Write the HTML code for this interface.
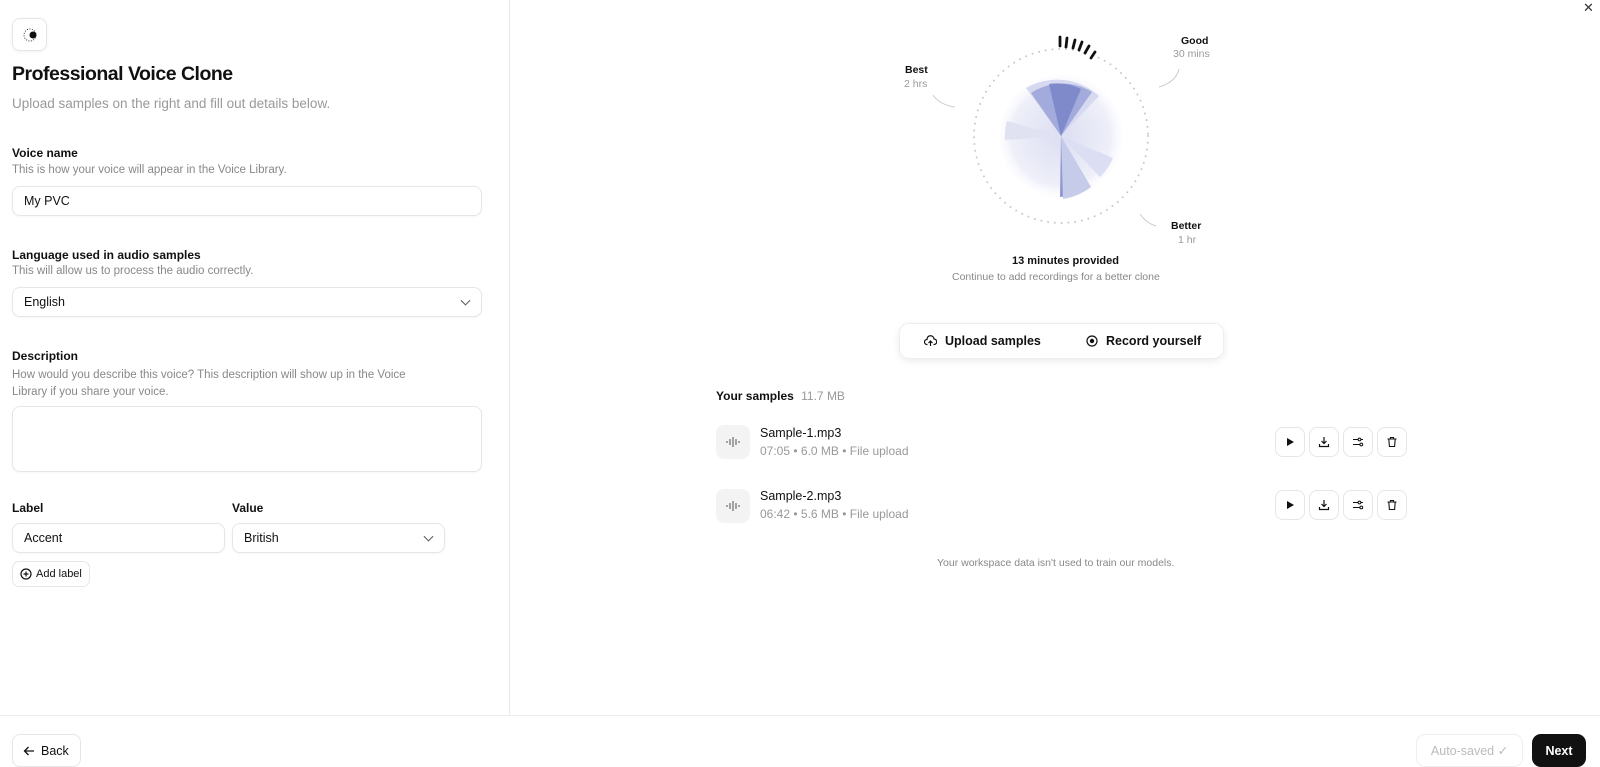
<!DOCTYPE html>
<html><head><meta charset="utf-8"><style>
*{box-sizing:border-box;margin:0;padding:0}
body{width:1600px;height:767px;background:#fff;font-family:"Liberation Sans",sans-serif;color:#111;position:relative;overflow:hidden}
.a{position:absolute}
.lbl{font-size:12px;font-weight:bold;color:#111}
.hint{font-size:11.5px;color:#888}
.inp{position:absolute;border:1px solid #e6e6e6;border-radius:8px;background:#fff;font-size:12.5px;padding-left:11px;display:flex;align-items:center;color:#111;box-shadow:0 1px 2px rgba(0,0,0,.04)}
.chev{position:absolute;right:12px;top:50%;width:7px;height:7px;border-right:1.3px solid #555;border-bottom:1.3px solid #555;transform:translateY(-70%) rotate(45deg)}
.ib{position:absolute;width:30px;height:30px;border:1px solid #e6e6e6;border-radius:8px;display:flex;align-items:center;justify-content:center;background:#fff}
.wav{position:absolute;width:34px;height:34px;border-radius:8px;background:#f3f3f3;display:flex;align-items:center;justify-content:center}
</style></head><body>
<div class="a" style="left:509px;top:0;width:1px;height:715px;background:#e8e8e8"></div>
<div class="a" style="left:0;top:715px;width:1600px;height:1px;background:#ececec"></div>

<div class="a" style="left:12px;top:18px;width:35px;height:33px;border:1px solid #e6e6e6;border-radius:8px;box-shadow:0 1px 3px rgba(0,0,0,.06)">
<svg width="35" height="33" viewBox="0 0 35 33"><circle cx="17" cy="16" r="6" fill="none" stroke="#333" stroke-width="1" stroke-dasharray="1 1.5"/><circle cx="20" cy="16" r="3.5" fill="#111"/></svg></div>
<div class="a" style="left:12px;top:63px;font-size:19.5px;font-weight:bold;letter-spacing:-.5px">Professional Voice Clone</div>
<div class="a" style="left:12px;top:96px;font-size:13.5px;color:#999">Upload samples on the right and fill out details below.</div>

<div class="a lbl" style="left:12px;top:146px">Voice name</div>
<div class="a hint" style="left:12px;top:164px">This is how your voice will appear in the Voice Library.</div>
<div class="inp" style="left:12px;top:186px;width:470px;height:30px">My PVC</div>

<div class="a lbl" style="left:12px;top:248px">Language used in audio samples</div>
<div class="a hint" style="left:12px;top:265px">This will allow us to process the audio correctly.</div>
<div class="inp" style="left:12px;top:287px;width:470px;height:30px">English<span class="chev"></span></div>

<div class="a lbl" style="left:12px;top:349px">Description</div>
<div class="a hint" style="left:12px;top:367px;width:428px;line-height:17px">How would you describe this voice? This description will show up in the Voice Library if you share your voice.</div>
<div class="inp" style="left:12px;top:406px;width:470px;height:66px"></div>

<div class="a lbl" style="left:12px;top:501px">Label</div>
<div class="a lbl" style="left:232px;top:501px">Value</div>
<div class="inp" style="left:12px;top:523px;width:213px;height:30px">Accent</div>
<div class="inp" style="left:232px;top:523px;width:213px;height:30px">British<span class="chev"></span></div>
<div class="a" style="left:12px;top:561px;width:78px;height:26px;border:1px solid #e6e6e6;border-radius:7px;font-size:11px;display:flex;align-items:center;padding-left:7px;gap:4px"><svg width="12" height="12" viewBox="0 0 12 12"><circle cx="6" cy="6" r="5" fill="none" stroke="#111" stroke-width="1.2"/><path d="M6 3.5v5M3.5 6h5" stroke="#111" stroke-width="1.2"/></svg>Add label</div>

<div class="a" style="left:12px;top:734px;width:69px;height:33px;border:1px solid #e6e6e6;border-radius:8px;font-size:12.5px;display:flex;align-items:center;padding-left:10px;gap:6px"><svg width="12" height="12" viewBox="0 0 12 12"><path d="M11 6H1.5M5.5 2L1.5 6l4 4" fill="none" stroke="#111" stroke-width="1.3"/></svg>Back</div>
<div class="a" style="left:1416px;top:734px;width:107px;height:33px;border:1px solid #eee;border-radius:9px;font-size:12.5px;color:#bbb;display:flex;align-items:center;justify-content:center">Auto-saved ✓</div>
<div class="a" style="left:1532px;top:734px;width:54px;height:33px;background:#111;border-radius:9px;font-size:12.5px;font-weight:bold;color:#fff;display:flex;align-items:center;justify-content:center">Next</div>
<div class="a" style="left:1583px;top:0;font-size:13px;color:#333">✕</div>

<svg class="a" style="left:880px;top:20px" width="340" height="230" viewBox="880 20 340 230">
<defs><radialGradient id="g" cx="50%" cy="50%" r="50%"><stop offset="0" stop-color="#dcdef2"/><stop offset=".8" stop-color="#eeeff9"/><stop offset="1" stop-color="#fafaff" stop-opacity=".2"/></radialGradient></defs>
<circle cx="1061" cy="136" r="62" fill="url(#g)"/>
<circle cx="1061" cy="136" r="87" fill="none" stroke="#c8c8c8" stroke-width="2" stroke-linecap="round" stroke-dasharray="0 6.8"/>
<path d="M1061 136L1026 88A62 62 0 0 1 1099 96Z" fill="#d6d9f0"/>
<path d="M1061 136L1031 93A57 57 0 0 1 1092 92Z" fill="#a2abdb"/>
<path d="M1061 136L1049 84A53 53 0 0 1 1081 89Z" fill="#7f8aca"/>
<path d="M1061 136L1075 194A60 60 0 0 1 1060 197Z" fill="#8e98d0"/>
<path d="M1061 136L1091 187A62 62 0 0 1 1063 199Z" fill="#c6cbea"/>
<path d="M1061 136L1113 158A57 57 0 0 1 1100 177Z" fill="#dcdff3"/>
<path d="M1061 136L1005 140A56 56 0 0 1 1007 121Z" fill="#e0e2f2"/>
<g stroke="#111" stroke-width="2.8" stroke-linecap="round">
<path d="M1060 37v9M1067 38l-1 9M1075 40l-2 8M1082 42l-3 8M1089 46l-4 7M1095 52l-4 6"/></g>
<path d="M955 107q-15-2-22-12" fill="none" stroke="#ccc"/>
<path d="M1159 87q17-5 20-18" fill="none" stroke="#ccc"/>
<path d="M1140 214q6 9 16 12" fill="none" stroke="#ccc"/>
</svg>
<div class="a" style="left:905px;top:64px;font-size:10.5px;font-weight:bold">Best</div>
<div class="a" style="left:904px;top:78px;font-size:10.5px;color:#999">2 hrs</div>
<div class="a" style="left:1181px;top:35px;font-size:10.5px;font-weight:bold">Good</div>
<div class="a" style="left:1173px;top:48px;font-size:10.5px;color:#999">30 mins</div>
<div class="a" style="left:1171px;top:220px;font-size:10.5px;font-weight:bold">Better</div>
<div class="a" style="left:1178px;top:234px;font-size:10.5px;color:#999">1 hr</div>
<div class="a" style="left:1012px;top:255px;font-size:11px;font-weight:bold">13 minutes provided</div>
<div class="a" style="left:952px;top:271px;font-size:10.5px;color:#888">Continue to add recordings for a better clone</div>

<div class="a" style="left:899px;top:323px;width:325px;height:36px;border:1px solid #eee;border-radius:10px;box-shadow:0 2px 8px rgba(0,0,0,.08);font-size:12.5px;font-weight:bold">
<span class="a" style="left:24px;top:10px;display:flex;gap:8px;align-items:center"><svg width="13" height="12" viewBox="0 0 13 12"><path d="M3.5 9.5H3A2.5 2.5 0 0 1 3 4.5 3.5 3.5 0 0 1 10 4a2.5 2.5 0 0 1 0 5.5h-.5M6.5 11V6M4.5 8l2-2 2 2" fill="none" stroke="#111" stroke-width="1.2"/></svg>Upload samples</span>
<span class="a" style="left:186px;top:10px;display:flex;gap:8px;align-items:center"><svg width="12" height="12" viewBox="0 0 12 12"><circle cx="6" cy="6" r="5" fill="none" stroke="#111" stroke-width="1.2"/><circle cx="6" cy="6" r="2.2" fill="#111"/></svg>Record yourself</span></div>

<div class="a" style="left:716px;top:389px;font-size:12px;font-weight:bold">Your samples <span style="font-weight:normal;color:#999;margin-left:4px">11.7 MB</span></div>

<div class="wav" style="left:716px;top:425px"><svg width="16" height="12" viewBox="0 0 16 12"><path d="M2 5v2M5 3v6M8 1v10M11 3v6M14 5v2" stroke="#777" stroke-width="1.3"/></svg></div>
<div class="a" style="left:760px;top:426px;font-size:12.5px">Sample-1.mp3</div>
<div class="a" style="left:760px;top:444px;font-size:12px;color:#999">07:05 • 6.0 MB • File upload</div>
<div class="wav" style="left:716px;top:489px"><svg width="16" height="12" viewBox="0 0 16 12"><path d="M2 5v2M5 3v6M8 1v10M11 3v6M14 5v2" stroke="#777" stroke-width="1.3"/></svg></div>
<div class="a" style="left:760px;top:489px;font-size:12.5px">Sample-2.mp3</div>
<div class="a" style="left:760px;top:507px;font-size:12px;color:#999">06:42 • 5.6 MB • File upload</div>

<div id="r1"></div>
<script>
var ic=['<svg width="10" height="10" viewBox="0 0 10 10"><path d="M2 1l7 4-7 4z" fill="#111"/></svg>',
'<svg width="12" height="12" viewBox="0 0 12 12"><path d="M6 1v6M3.5 5l2.5 2.5L8.5 5M1.5 8v2.5h9V8" fill="none" stroke="#111" stroke-width="1.2"/></svg>',
'<svg width="12" height="12" viewBox="0 0 12 12"><path d="M1 3.5h5M1 8.5h6.5M9 3.5h2" stroke="#111" stroke-width="1.1"/><circle cx="7.5" cy="3.5" r="1.4" fill="none" stroke="#111"/><circle cx="9.3" cy="8.5" r="1.4" fill="none" stroke="#111"/></svg>',
'<svg width="12" height="12" viewBox="0 0 12 12"><path d="M1.5 3h9M4.5 3V1.5h3V3M2.8 3l.6 7.5h5.2L9.2 3" fill="none" stroke="#111" stroke-width="1.1"/></svg>'];
var h='';[427,490].forEach(function(t){for(var i=0;i<4;i++)h+='<div class="ib" style="left:'+(1275+i*34)+'px;top:'+t+'px">'+ic[i]+'</div>';});
document.getElementById('r1').outerHTML=h;
</script>

<div class="a" style="left:937px;top:557px;font-size:10.5px;color:#888">Your workspace data isn't used to train our models.</div>
</body></html>
